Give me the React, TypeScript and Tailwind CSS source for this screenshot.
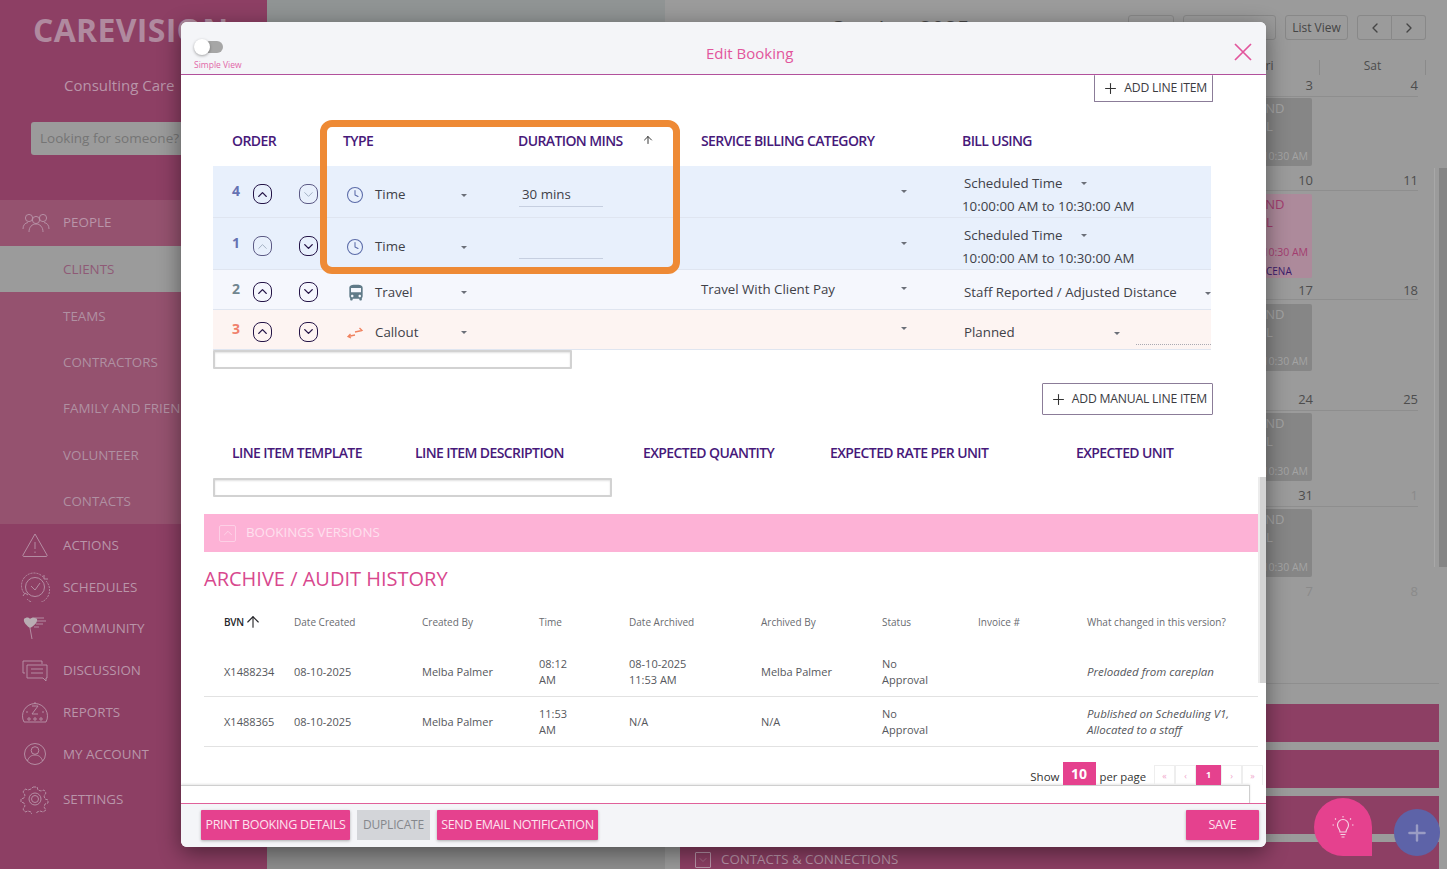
import { ArrowUp, ChevronDown, ChevronLeft, ChevronRight, ChevronUp, Clock, Plus } from 'lucide-react'
import { MdDirectionsBus } from 'react-icons/md'

const ic = 'w-[30px] h-[30px] fill-none stroke-[#b995a9]'

const PeopleIcon = () => (
  <svg viewBox="0 0 30 30" className={ic} strokeWidth="0.9">
    <circle cx="8" cy="10" r="3.6" /><circle cx="15" cy="12" r="3.6" /><circle cx="22" cy="10" r="3.6" />
    <path d="M2 21c0-4 2-6 5-6.500M28 21c0-4-2-6-5-6.500M8 24c0-5 3-8 7-8s7 3 7 8" />
  </svg>
)
const ActionsIcon = () => (
  <svg viewBox="0 0 30 30" className={ic} strokeWidth="0.9">
    <path d="M15 4 27 25a1 1 0 0 1-1 1.500H4A1 1 0 0 1 3 25Z" /><path d="M15 12v7M15 21.500v1.500" />
  </svg>
)
const SchedulesIcon = () => (
  <svg viewBox="0 0 30 30" className={ic} strokeWidth="0.9">
    <circle cx="15" cy="15" r="9.500" /><path d="M11 14l4 4 5-7" />
    <path d="M4 21A12.500 12.500 0 0 1 24 6M26 9a12.500 12.500 0 0 1-19 18" strokeDasharray="2 1" />
    <path d="M24 3v4h4M3 24l2-3 3 2" />
  </svg>
)
const CommunityIcon = () => (
  <svg viewBox="0 0 30 30" className="w-[30px] h-[30px]">
    <path d="M4 6c2-2 5-2 6 0 2-2 5-2 7 0 1 3-3 7-7 9-3-2-7-6-6-9Z" fill="#b9adb3" />
    <path d="M15 5h9M17 8h9M16 11h7M14 14h5M10 15l2 11" stroke="#b995a9" strokeWidth="0.9" fill="none" />
  </svg>
)
const DiscussionIcon = () => (
  <svg viewBox="0 0 30 30" className={ic} strokeWidth="0.9">
    <path d="M5 18H3V6h19v3" /><path d="M7 10h20v13h-1v3l-3-3H7Z" /><path d="M11 14h12M11 18h12" />
  </svg>
)
const ReportsIcon = () => (
  <svg viewBox="0 0 30 30" className={ic} strokeWidth="0.9">
    <path d="M4 25a12.500 12.500 0 1 1 22 0Z" /><path d="M12 9h6l-6 8h6M15 5v2M6 15h2M22 15h2" />
    <circle cx="9" cy="22" r="1.200" /><circle cx="15" cy="22" r="1.200" /><circle cx="21" cy="22" r="1.200" />
  </svg>
)
const AccountIcon = () => (
  <svg viewBox="0 0 30 30" className={ic} strokeWidth="0.9">
    <circle cx="15" cy="15" r="10.500" /><circle cx="15" cy="11.500" r="3.800" /><path d="M7.500 22c1-4 4-6 7.500-6s6.500 2 7.500 6" />
  </svg>
)
const SettingsIcon = () => (
  <svg viewBox="0 0 30 30" className={ic} strokeWidth="0.9">
    <path d="M13 3h4l1 3 3 1 3-1 2 3-2 3 1 3 3 1v3l-3 1-1 3 2 3-3 2-3-1-3 1-1 3h-4l-1-3-3-1-3 1-2-3 2-3-1-3-3-1v-3l3-1 1-3-2-3 2-3 3 1 3-1Z" strokeDasharray="3 1" />
    <circle cx="15" cy="15" r="6" /><circle cx="15" cy="15" r="3.500" />
  </svg>
)

const Caret = ({ className = '' }: { className?: string }) => (
  <svg viewBox="0 0 6 3" className={`w-[6px] h-[3px] fill-[#6b6f78] ${className}`}>
    <path d="M0 0h6L3 3Z" />
  </svg>
)

const SquircleBtn = ({ dir, off }: { dir: 'up' | 'down'; off?: boolean }) => {
  const cls = off ? 'border-[#5c5a85] text-[#8c9cb0]' : 'border-[#241447] text-[#241447]'
  return (
    <span className={`w-[19px] h-[20px] rounded-[8px] border flex items-center justify-center shrink-0 ${cls}`}>
      {dir === 'up'
        ? <ChevronUp size={15} strokeWidth={off ? 1.2 : 2.2} />
        : <ChevronDown size={15} strokeWidth={off ? 1.2 : 2.2} />}
    </span>
  )
}

const CalloutIcon = () => (
  <svg viewBox="0 0 18 14" className="w-[18px] h-[14px] fill-none stroke-[#f0825f]" strokeWidth="1.3">
    <path d="M9 6 16 4.500M13.500 2 16 4.500l-3 1M9 9 2 10.500M4.500 8 2 10.500l3 1.500" />
  </svg>
)

const headCls = 'text-[14px] font-semibold text-[#47197a] tracking-[-0.6px] uppercase'
const cellText = 'text-[13.3px] text-[#3f4148]'

type RowProps = {
  num: string; numCls: string; bg: string; h: string
  upOff?: boolean; downOff?: boolean
  icon: React.ReactNode; type: string
  duration?: string; hasInput?: boolean
  service?: string; bill: React.ReactNode
}

const LineRow = (p: RowProps) => (
  <div className={`grid grid-cols-[130px_175px_183px_261px_249px] border-b border-[#dfe5f0] ${p.bg} ${p.h}`}>
    <div className="flex items-center pl-[19px] pt-[4px]">
      <span className={`w-[21px] text-[14px] font-bold -mt-[7px] ${p.numCls}`}>{p.num}</span>
      <SquircleBtn dir="up" off={p.upOff} />
      <span className="w-[27px]" />
      <SquircleBtn dir="down" off={p.downOff} />
    </div>
    <div className="flex items-center pt-[6px]">
      <span className="w-[32px] flex pl-[3px]">{p.icon}</span>
      <span className={`w-[86px] ${cellText}`}>{p.type}</span>
      <Caret />
    </div>
    <div className="flex items-center">
      {p.hasInput && (
        <div className={`w-[84px] h-[26px] mt-[4px] ml-px pl-[3px] border-b border-[#c6cfe0] ${cellText} leading-[26px]`}>
          {p.duration}
        </div>
      )}
    </div>
    <div className="flex items-center">
      <span className={`w-[200px] ${cellText}`}>{p.service}</span>
      <Caret className="-mt-[2px]" />
    </div>
    {p.bill}
  </div>
)

const BillTwoLine = () => (
  <div className="flex flex-col justify-center pt-[6px]">
    <div className="flex items-center pl-[2px] h-[23px]">
      <span className={`w-[117px] ${cellText}`}>Scheduled Time</span>
      <Caret />
    </div>
    <div className={`h-[23px] leading-[23px] ${cellText}`}>10:00:00 AM to 10:30:00 AM</div>
  </div>
)

const ModalHeader = () => (
  <div className="h-[53px] flex bg-[#f4f5f8] border-b border-[#b2519c] pl-[13px] pr-[13px] rounded-t-[6px]">
    <div className="w-[512px] pt-[17px]">
      <div className="relative w-[29px] h-[16px] flex items-center">
        <span className="ml-[2px] w-[27px] h-[12px] rounded-full bg-[#a6a6a6]" />
        <span className="absolute left-0 top-0 w-[16px] h-[16px] rounded-full bg-white shadow-[0_1px_3px_rgba(0,0,0,0.35)]" />
      </div>
      <div className="mt-[4px] text-[8.5px] leading-[12px] text-[#e267a8]">Simple View</div>
    </div>
    <div className="pt-[19px] text-[15px] leading-[24px] text-[#e2559c]">Edit Booking</div>
    <button className="ml-auto mt-[18px] h-[24px]">
      <svg viewBox="0 0 20 20" className="w-[20px] h-[20px] stroke-[#e2559c]" strokeWidth="1.700">
        <path d="M2 2l16 16M18 2 2 18" />
      </svg>
    </button>
  </div>
)

const OutlineBtn = ({ label, cls }: { label: string; cls: string }) => (
  <div className={`flex items-center justify-end whitespace-nowrap bg-white border border-[#8b7c98] rounded-[1px] pr-[5px] ${cls}`}>
    <Plus size={17} strokeWidth={1.5} className="text-[#333] mr-[5px]" />
    <span className="text-[12.2px] font-medium text-[#3b3b3f] tracking-[-0.2px]">{label}</span>
  </div>
)

const ScrollStub = ({ cls }: { cls: string }) => (
  <div className={`h-[19px] bg-white border-2 border-[#d2d2d2] rounded-[1px] shadow-[inset_0_1px_2px_rgba(0,0,0,0.12)] ${cls}`} />
)

const auditGrid = 'grid grid-cols-[70px_128px_117px_90px_132px_121px_96px_109px_1fr] ml-[23px] w-[1054px] pl-[20px]'
const auditCell = 'text-[11px] leading-[16px] text-[#55575c]'

const AuditRow = (p: { bvn: string; time: string[]; archived: string[]; by: string; what: string[] }) => (
  <div className={`${auditGrid} items-center h-[50px] border-b border-[#e2e2e2]`}>
    <span className={auditCell}>{p.bvn}</span>
    <span className={auditCell}>08-10-2025</span>
    <span className={auditCell}>Melba Palmer</span>
    <span className={auditCell}>{p.time[0]}<br />{p.time[1]}</span>
    <span className={auditCell}>{p.archived[0]}{p.archived[1] && <><br />{p.archived[1]}</>}</span>
    <span className={auditCell}>{p.by}</span>
    <span className={auditCell}>No<br />Approval</span>
    <span />
    <span className="text-[11.5px] leading-[16px] text-[#55575c] italic">{p.what[0]}{p.what[1] && <><br />{p.what[1]}</>}</span>
  </div>
)

const PagerCell = ({ t }: { t: string }) => (
  <span className="w-[21px] h-[20px] border border-[#eeeeee] border-b-0 flex items-center justify-center text-[9px] text-[#f0a9cc]">{t}</span>
)

const FootBtn = ({ cls, children }: { cls: string; children: React.ReactNode }) => (
  <span className={`h-[30px] pt-px rounded-[1px] bg-[#e5418e] text-[#fde3ef] text-[12.5px] font-medium tracking-[-0.3px] flex items-center justify-center whitespace-nowrap shadow-[0_1px_3px_rgba(0,0,0,0.3)] ${cls}`}>
    {children}
  </span>
)

const Modal = () => (
  <div className="absolute left-[181px] top-[22px] w-[1085px] h-[825px] flex flex-col bg-white rounded-[6px] shadow-[0_6px_22px_rgba(0,0,0,0.45)] font-['Open_Sans',sans-serif]">
    <ModalHeader />
    <div className="relative h-[728px] overflow-hidden">
      <div className="flex justify-end pr-[53px]">
        <OutlineBtn label="ADD LINE ITEM" cls="h-[27px] border-t-0 w-[119px]" />
      </div>

      <div className="ml-[32px] w-[998px] mt-[18px]">
        <div className="grid grid-cols-[130px_175px_183px_261px_249px] h-[46px] items-center pb-[6px]">
          <span className={`pl-[19px] ${headCls}`}>Order</span>
          <span className={headCls}>Type</span>
          <span className={`flex items-center ${headCls}`}>
            Duration Mins
            <ArrowUp size={12} strokeWidth={1.8} className="text-[#222] ml-[19px]" />
          </span>
          <span className={headCls}>Service Billing Category</span>
          <span className={headCls}>Bill Using</span>
        </div>
        <LineRow
          num="4" numCls="text-[#6672b2]" bg="bg-[#e8f0fc]" h="h-[52px]" downOff
          icon={<Clock size={18} strokeWidth={1.4} className="text-[#5b6ba8]" />}
          type="Time" hasInput duration="30 mins" bill={<BillTwoLine />}
        />
        <LineRow
          num="1" numCls="text-[#6672b2]" bg="bg-[#e8f0fc]" h="h-[52px]" upOff
          icon={<Clock size={18} strokeWidth={1.4} className="text-[#5b6ba8]" />}
          type="Time" hasInput bill={<BillTwoLine />}
        />
        <LineRow
          num="2" numCls="text-[#71858f]" bg="bg-[#f5f7fd]" h="h-[40px]"
          icon={<MdDirectionsBus size={20} className="text-[#5f7a88]" />}
          type="Travel" service="Travel With Client Pay"
          bill={
            <div className="flex items-center pl-[2px] mt-[7px]">
              <span className={`w-[241px] whitespace-nowrap ${cellText}`}>Staff Reported / Adjusted Distance</span>
              <Caret />
            </div>
          }
        />
        <LineRow
          num="3" numCls="text-[#f0806b]" bg="bg-[#fdf4f2]" h="h-[40px]"
          icon={<CalloutIcon />} type="Callout"
          bill={
            <div className="relative flex items-center pl-[2px] mt-[7px]">
              <span className={`w-[150px] ${cellText}`}>Planned</span>
              <Caret />
              <span className="absolute left-[174px] right-0 bottom-[4px] border-b border-dotted border-[#a9a9b2]" />
            </div>
          }
        />
        <ScrollStub cls="w-[359px]" />
      </div>

      <div className="flex justify-end pr-[53px] mt-[14px]">
        <OutlineBtn label="ADD MANUAL LINE ITEM" cls="h-[32px] w-[171px]" />
      </div>

      <div className="ml-[32px] mt-[25px] h-[24px] grid grid-cols-[183px_228px_187px_246px_1fr] pl-[19px] items-center">
        <span className={headCls}>Line Item Template</span>
        <span className={headCls}>Line Item Description</span>
        <span className={headCls}>Expected Quantity</span>
        <span className={headCls}>Expected Rate Per Unit</span>
        <span className={headCls}>Expected Unit</span>
      </div>
      <ScrollStub cls="ml-[32px] mt-[14px] w-[399px]" />

      <div className="ml-[23px] mt-[17px] w-[1054px] h-[38px] bg-[#fdb2d6] flex items-center pl-[15px]">
        <span className="w-[17px] h-[17px] border border-[#fdd0e6] rounded-[2px] flex items-center justify-center">
          <ChevronUp size={14} strokeWidth={1.2} className="text-[#fde0ee]" />
        </span>
        <span className="ml-[10px] text-[13.3px] text-[#fde0ee]">BOOKINGS VERSIONS</span>
      </div>

      <div className="ml-[23px] h-[54px] flex items-center text-[20px] text-[#d8488e]">ARCHIVE / AUDIT HISTORY</div>

      <div className={`${auditGrid} h-[32px] items-center mb-[9px] text-[10px] text-[#696b70]`}>
        <span className="flex items-center text-[#26262a] font-semibold tracking-[-0.3px]">
          BVN<ArrowUp size={18} strokeWidth={1.5} />
        </span>
        <span>Date Created</span>
        <span>Created By</span>
        <span>Time</span>
        <span>Date Archived</span>
        <span>Archived By</span>
        <span>Status</span>
        <span>Invoice #</span>
        <span>What changed in this version?</span>
      </div>
      <AuditRow bvn="X1488234" time={['08:12', 'AM']} archived={['08-10-2025', '11:53 AM']} by="Melba Palmer" what={['Preloaded from careplan']} />
      <AuditRow bvn="X1488365" time={['11:53', 'AM']} archived={['N/A']} by="N/A" what={['Published on Scheduling V1,', 'Allocated to a staff']} />

      <div className="flex justify-end items-end h-[23px] mt-[15px] pr-[3px]">
        <span className="text-[11.5px] leading-[16px] text-[#333]">Show</span>
        <span className="ml-[3px] w-[33px] h-[23px] bg-[#e5418e] text-white text-[14px] font-bold flex items-center justify-center">10</span>
        <span className="ml-[4px] mr-[8px] text-[11.3px] leading-[16px] text-[#333]">per page</span>
        <PagerCell t="«" />
        <PagerCell t="‹" />
        <span className="w-[25px] h-[20px] bg-[#e5418e] text-white text-[9px] font-bold flex items-center justify-center">1</span>
        <PagerCell t="›" />
        <PagerCell t="»" />
      </div>
      <div className="h-[19px] w-[1069px] bg-white border-t border-r border-[#cfcfcf] shadow-[0_-1px_2px_rgba(0,0,0,0.1)]" />

      <div className="absolute right-0 top-[402px] w-[8px] h-[206px] bg-[#d4d4d4] border-l-2 border-[#ececec]" />
    </div>

    <div className="flex-1 flex items-center gap-[7px] bg-[#f4f5f8] border-t border-[#e0609a] pl-[20px] pr-[7px] pb-[2px] rounded-b-[6px]">
      <FootBtn cls="w-[149px]">PRINT BOOKING DETAILS</FootBtn>
      <span className="w-[73px] h-[30px] bg-[#d3d5d9] text-[#85878c] text-[12px] tracking-[-0.2px] flex items-center justify-center">DUPLICATE</span>
      <FootBtn cls="w-[161px]">SEND EMAIL NOTIFICATION</FootBtn>
      <FootBtn cls="w-[73px] ml-auto">SAVE</FootBtn>
    </div>
  </div>
)

const navChild = ['CLIENTS', 'TEAMS', 'CONTRACTORS', 'FAMILY AND FRIENDS', 'VOLUNTEER', 'CONTACTS']
const navMain = [
  { label: 'ACTIONS', icon: <ActionsIcon />, cls: 'h-[42px]' },
  { label: 'SCHEDULES', icon: <SchedulesIcon />, cls: 'h-[41px]' },
  { label: 'COMMUNITY', icon: <CommunityIcon />, cls: 'h-[42px]' },
  { label: 'DISCUSSION', icon: <DiscussionIcon />, cls: 'h-[42px]' },
  { label: 'REPORTS', icon: <ReportsIcon />, cls: 'h-[41px]' },
  { label: 'MY ACCOUNT', icon: <AccountIcon />, cls: 'h-[43px]' },
  { label: 'SETTINGS', icon: <SettingsIcon />, cls: 'h-[42px] mt-[3px]' },
]

const Sidebar = () => (
  <aside className="w-[267px] shrink-0 h-full bg-[#8d3f64] overflow-hidden font-['Open_Sans',sans-serif]">
    <div className="h-[60px] flex items-center pl-[33px] text-[32px] font-bold text-[#b08a9f] tracking-[0.3px]">CAREVISION</div>
    <div className="mt-[14px] h-[22px] pl-[64px] text-[15px] leading-[22px] text-[#b995a9]">Consulting Care</div>
    <div className="mt-[26px] ml-[31px] w-[220px] h-[33px] rounded-[3px] bg-[#9b9b9b] flex items-center pl-[9px] text-[13.500px] text-[#757575]">Looking for someone?</div>
    <div className="mt-[45px] bg-[#95526f]">
      <div className="h-[46px] pb-px flex items-center pl-[21px] text-[13.400px] text-[#b995a9]">
        <PeopleIcon /><span className="ml-[12px]">PEOPLE</span>
      </div>
      {navChild.map((n) => (
        <div
          key={n}
          className={`h-[46.400px] flex items-center pl-[63px] text-[13.400px] whitespace-nowrap ${n === 'CLIENTS' ? 'bg-[#9b9b9b] text-[#8f5a76]' : 'text-[#b090a2]'}`}
        >
          {n}
        </div>
      ))}
    </div>
    {navMain.map((n) => (
      <div key={n.label} className={`flex items-center pl-[20px] text-[13.400px] text-[#b995a9] ${n.cls}`}>
        {n.icon}<span className="ml-[13px]">{n.label}</span>
      </div>
    ))}
  </aside>
)

const weeks = [
  { a: '3', b: '4', row: 'h-[22px] pb-[2px]', dim: false, card: 'h-[68px] mt-px bg-[#868686]', spacer: 'h-[6px]', tone: 'grey' },
  { a: '10', b: '11', row: 'h-[19px] pb-px', dim: false, card: 'h-[84px] mt-[3px] bg-[#ad8a9b]', spacer: 'h-[5px]', tone: 'pink' },
  { a: '17', b: '18', row: 'h-[17px]', dim: false, card: 'h-[67px] mt-[4px] bg-[#868686]', spacer: 'h-[17px]', tone: 'grey' },
  { a: '24', b: '25', row: 'h-[23px] pb-[2px]', dim: false, card: 'h-[68px] mt-[2px] bg-[#868686]', spacer: 'h-[4px]', tone: 'grey' },
  { a: '31', b: '1', row: 'h-[22px] pb-[2px]', dim: true, card: 'h-[68px] mt-[2px] bg-[#868686]', spacer: 'h-[5px]', tone: 'grey' },
]

const Calendar = () => (
  <section className="flex flex-col items-end pr-[21px] text-[#4d4d4d]">
    <div className="h-[15px] flex text-[12px] leading-[12px]">
      <span className="w-[106px] text-center border-r border-[#8a8a8a]">Fri</span>
      <span className="w-[106px] text-center border-r border-[#8a8a8a]">Sat</span>
    </div>
    {weeks.map((w) => (
      <div key={w.a} className="w-[212px]">
        <div className={`flex text-[13px] items-end mr-[8px] border-b border-[#8e8e8e] ${w.row}`}>
          <span className="w-[106px] pr-[7px] text-right leading-[18px]">{w.a}</span>
          <span className={`w-[98px] text-right leading-[18px] ${w.dim ? 'text-[#8a8a8a]' : ''}`}>{w.b}</span>
        </div>
        <div className={`relative w-[98px] rounded-[2px] flex flex-col pr-[4px] text-[13px] ${w.card} ${w.tone === 'pink' ? 'text-[#a33d6f]' : 'text-[#a4a4a4]'}`}>
          <span className="pl-[43px] pt-[1px] leading-[18px]">AND</span>
          <span className="pl-[52px] leading-[18px]">L</span>
          <span className={`mt-auto text-right text-[10.5px] ${w.tone === 'pink' ? 'mb-[17px]' : 'mb-[1px]'}`}>10:30 AM</span>
          {w.tone === 'pink' && <span className="absolute left-[52px] -bottom-[1px] text-[10px] text-[#3b1a6b]">CENA</span>}
        </div>
        <div className={w.spacer} />
      </div>
    ))}
    <div className="w-[212px] flex text-[13px] leading-[18px] text-[#8a8a8a]">
      <span className="w-[106px] pr-[7px] text-right">7</span>
      <span className="w-[98px] text-right">8</span>
    </div>
  </section>
)

const TopBtn = ({ cls, children }: { cls: string; children?: React.ReactNode }) => (
  <span className={`h-[25px] rounded-[3px] border border-[#888888] flex items-center justify-center text-[12px] text-[#454545] ${cls}`}>{children}</span>
)

const Main = () => (
  <main className="flex-1 flex h-full font-['Open_Sans',sans-serif]">
    <div className="w-[398px] shrink-0 h-full bg-[#8f8f8f]">
      <div className="h-[24px] bg-[#909494]" />
    </div>
    <div className="flex-1 min-w-0 relative">
      <div className="h-[60px] flex items-start pt-[15px] pr-[21px] gap-[9px]">
        <span className="ml-[165px] -mt-[3px] text-[22px] text-[#454545] whitespace-nowrap">October 2025</span>
        <TopBtn cls="ml-auto w-[46px]" />
        <TopBtn cls="w-[93px]" />
        <TopBtn cls="w-[63px]">List View</TopBtn>
        <div className="flex">
          <TopBtn cls="w-[35px] rounded-r-none"><ChevronLeft size={16} /></TopBtn>
          <TopBtn cls="w-[34px] rounded-l-none border-l-0"><ChevronRight size={16} /></TopBtn>
        </div>
      </div>
      <Calendar />
      <div className="mt-[83px] ml-[15px] mr-[8px] flex flex-col gap-[8px]">
        <div className="border-t border-[#8e8e8e] mb-[12px]" />
        <div className="h-[38px] bg-[#8d3f64]" />
        <div className="h-[38px] bg-[#8d3f64]" />
        <div className="h-[38px] bg-[#8d3f64]" />
        <div className="h-[36px] bg-[#8d3f64] flex items-center pl-[15px] text-[13.300px] text-[#b995a9]">
          <span className="w-[16px] h-[16px] border border-[#b995a9] rounded-[1px] flex items-center justify-center mr-[10px]">
            <ChevronDown size={12} strokeWidth={1} />
          </span>
          CONTACTS &amp; CONNECTIONS
        </div>
      </div>
      <div className="absolute right-0 top-[168px] w-[13px] h-[399px] flex">
        <span className="w-[5px] border-l border-[#a8a8a8]" />
        <span className="w-[8px] bg-[#858585]" />
      </div>
    </div>
  </main>
)

const Floating = () => (
  <>
    <button className="absolute left-[1314px] top-[798px] w-[58px] h-[58px] rounded-full rounded-br-[4px] bg-[#e5418e] flex items-center justify-center">
      <svg viewBox="0 0 24 24" className="w-[24px] h-[24px] fill-none stroke-[#f6d6e6]" strokeWidth="1.100">
        <path d="M9 17c0-3-2.500-3.500-2.500-7a5.500 5.500 0 0 1 11 0c0 3.500-2.500 4-2.500 7ZM9.500 19.500h5M10.500 22h3" />
        <path d="M12 1v1.500M4 3.500l1 1M20 3.500l-1 1M1.500 10H3M21 10h1.500" />
      </svg>
    </button>
    <button className="absolute left-[1394px] top-[809px] w-[46px] h-[47px] rounded-full bg-[#5d63a8] flex items-center justify-center">
      <Plus size={26} strokeWidth={2.2} className="text-[#9a9cc4]" />
    </button>
  </>
)

export default function App() {
  return (
    <div className="relative w-[1447px] h-[869px] overflow-hidden flex bg-[#9b9b9b]">
      <Sidebar />
      <Main />
      <Floating />
      <Modal />
      {/* orange callout drawn over the screenshot */}
      <div className="absolute left-[320px] top-[120px] w-[360px] h-[154px] border-[7px] border-[#ee8a35] rounded-[12px]" />
    </div>
  )
}
